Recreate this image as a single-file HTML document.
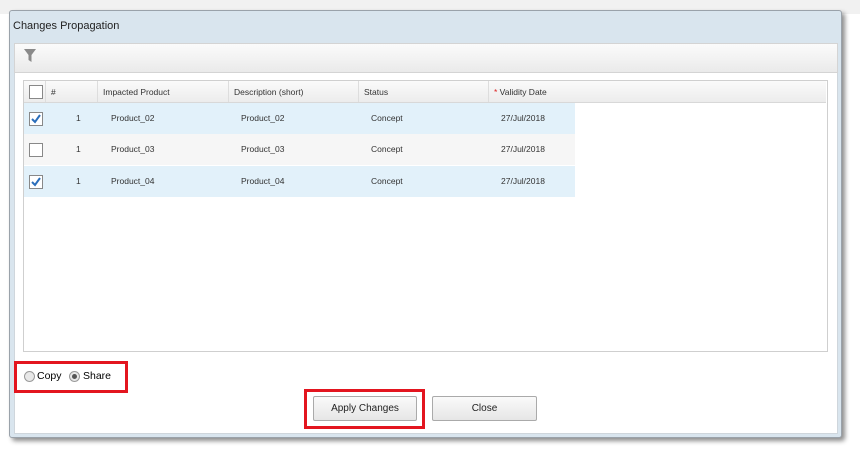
<!DOCTYPE html>
<html><head><style>
body{margin:0;width:860px;height:455px;background:#fff;position:relative;font-family:"Liberation Sans",sans-serif;overflow:hidden}
.a{position:absolute}
.bg{left:0;top:0;width:860px;height:14px;background:#f1f1f1}
.dlg{left:9px;top:10px;width:831px;height:426px;background:#d9e5ee;border:1px solid #9aa2aa;border-radius:3px;box-shadow:3px 3px 5px rgba(0,0,0,.45)}
.title{left:13px;top:20px;font-size:11px;color:#222}
.body{left:14px;top:43px;width:822px;height:389px;background:#fff;border:1px solid #cfd6dc}
.tb{left:14px;top:43px;width:822px;height:28px;background:linear-gradient(#fbfbfb,#eaeaea);border:1px solid #d4d4d4}
.grid{left:23px;top:80px;width:803px;height:270px;border:1px solid #cfcfcf;background:#fff}
.hdr{left:24px;top:81px;width:802px;height:21px;background:linear-gradient(#fafafa,#ececec);border-bottom:1px solid #d8d8d8;font-size:8.5px;color:#333}
.hdr div{position:absolute;top:0;height:21px;line-height:22px;border-left:1px solid #ddd;padding-left:5px;box-sizing:border-box}
.row{left:24px;width:551px;height:31px;font-size:8.5px;color:#333}
.row div{position:absolute;top:0;line-height:31px}
.cb{position:absolute;width:12px;height:12px;border:1px solid #888;background:#fff}
.red{border:3px solid #e3151f;box-sizing:border-box}
.btn{height:25px;border:1px solid #aaa;border-radius:2px;background:linear-gradient(#fafafa,#e6e6e6);font-size:10px;text-align:center;line-height:24px;color:#222;box-sizing:border-box}
.rad{position:absolute;width:9px;height:9px;border:1px solid #999;border-radius:50%;background:#e8e8e8}
</style></head><body>
<div class="a bg"></div>
<div class="a dlg"></div>
<div class="a title">Changes Propagation</div>
<div class="a body"></div>
<div class="a tb"></div>
<svg class="a" style="left:24px;top:49px" width="12" height="14" viewBox="0 0 12 14"><path d="M0 0H12L7.5 6V13L4.5 11V6Z" fill="#8a8a8a"/></svg>
<div class="a grid"></div>
<div class="a hdr">
<div style="left:0;width:22px;border-left:none"><span class="cb" style="left:5px;top:4px"></span></div>
<div style="left:21px;width:52px">#</div>
<div style="left:73px;width:131px">Impacted Product</div>
<div style="left:204px;width:130px">Description (short)</div>
<div style="left:334px;width:130px">Status</div>
<div style="left:464px;width:338px"><span style="color:#d22">*</span> Validity Date</div>
</div>
<div class="a row" style="top:103px;background:#e2f1fa"><span class="cb" style="left:5px;top:9px"></span><svg style="position:absolute;left:6px;top:10px" width="12" height="12"><path d="M2 6L5 9L10 2" stroke="#2a6ebb" stroke-width="2" fill="none"/></svg><div style="left:52px">1</div><div style="left:87px">Product_02</div><div style="left:217px">Product_02</div><div style="left:347px">Concept</div><div style="left:477px">27/Jul/2018</div></div>
<div class="a row" style="top:134px;background:#f6f6f6"><span class="cb" style="left:5px;top:9px"></span><div style="left:52px">1</div><div style="left:87px">Product_03</div><div style="left:217px">Product_03</div><div style="left:347px">Concept</div><div style="left:477px">27/Jul/2018</div></div>
<div class="a row" style="top:166px;background:#e2f1fa"><span class="cb" style="left:5px;top:9px"></span><svg style="position:absolute;left:6px;top:10px" width="12" height="12"><path d="M2 6L5 9L10 2" stroke="#2a6ebb" stroke-width="2" fill="none"/></svg><div style="left:52px">1</div><div style="left:87px">Product_04</div><div style="left:217px">Product_04</div><div style="left:347px">Concept</div><div style="left:477px">27/Jul/2018</div></div>
<div class="a red" style="left:14px;top:361px;width:114px;height:32px"></div>
<span class="rad" style="left:24px;top:371px"></span><span class="a" style="left:37px;top:370px;font-size:10.5px">Copy</span>
<span class="rad" style="left:69px;top:371px"></span><span class="a" style="left:72px;top:374px;width:5px;height:5px;border-radius:50%;background:#555"></span><span class="a" style="left:83px;top:370px;font-size:10.5px">Share</span>
<div class="a red" style="left:304px;top:389px;width:121px;height:40px"></div>
<div class="a btn" style="left:313px;top:396px;width:104px">Apply Changes</div>
<div class="a btn" style="left:432px;top:396px;width:105px">Close</div>
</body></html>
